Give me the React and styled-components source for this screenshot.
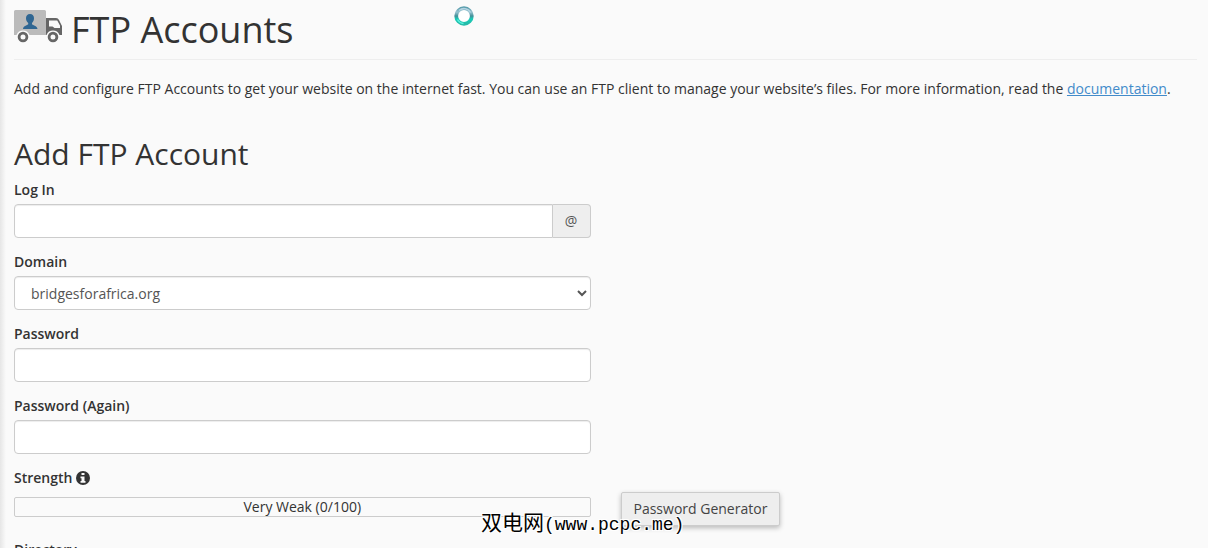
import React from 'react'
import styled, { createGlobalStyle } from 'styled-components'

const GlobalStyle = createGlobalStyle`
  * {
    box-sizing: border-box;
  }

  body {
    margin: 0;
    background: #fafafa;
    color: #333;
    font-family: 'Open Sans', 'Noto Sans', sans-serif;
    font-size: 14px;
    line-height: 20px;
  }
`

const Page = styled.main`
  position: relative;
  height: 100vh;
  overflow: hidden;
  padding: 0 11px 0 14px;
  background: linear-gradient(to right, #e6e6e6, #fafafa 6px);
`

const PageHeader = styled.header`
  display: flex;
  align-items: flex-start;
  gap: 9px;
  height: 60px;
  padding-top: 10px;
  border-bottom: 1px solid #eee;
`

const PageTitle = styled.h1`
  margin: 0;
  font-size: 36px;
  font-weight: 400;
  line-height: 40px;
`

const Description = styled.p`
  margin: 19px 0 0;
`

const Link = styled.a`
  color: #428bca;
  text-decoration: underline;
`

const SectionTitle = styled.h2`
  margin: 38px 0 10px;
  font-size: 30px;
  font-weight: 400;
  line-height: 33px;
`

const Row = styled.div`
  display: grid;
  grid-template-columns: 1fr 1fr;
  column-gap: 30px;
  align-items: start;
`

const FormGroup = styled.div`
  margin-bottom: 14px;
`

const Label = styled.label`
  display: flex;
  align-items: center;
  gap: 4px;
  margin-bottom: 4px;
  font-weight: 600;
`

const InputGroup = styled.div`
  display: flex;
`

const Input = styled.input`
  display: block;
  flex: 1;
  width: 100%;
  min-width: 0;
  height: 34px;
  padding: 6px 12px;
  border: 1px solid #ccc;
  border-radius: ${props => (props.$joined ? '4px 0 0 4px' : '4px')};
  background: #fff;
  box-shadow: inset 0 1px 1px rgba(0, 0, 0, 0.075);
  color: #555;
  font: inherit;
`

const Addon = styled.span`
  width: 38px;
  padding: 6px 0;
  border: 1px solid #ccc;
  border-left: 0;
  border-radius: 0 4px 4px 0;
  background: #eee;
  color: #555;
  text-align: center;
`

const Select = styled.select`
  display: block;
  width: 100%;
  height: 34px;
  padding: 6px 0 6px 12px;
  border: 1px solid #ccc;
  border-radius: 4px;
  background: #fff;
  box-shadow: inset 0 1px 1px rgba(0, 0, 0, 0.075);
  color: #555;
  font: inherit;
`

const StrengthRow = styled(Row)`
  margin-bottom: 14px;
`

const StrengthBar = styled.div`
  height: 20px;
  margin-top: 5px;
  border: 1px solid #ccc;
  border-radius: 2px;
  line-height: 18px;
  text-align: center;
`

const Button = styled.button`
  justify-self: start;
  height: 34px;
  padding: 0 12px;
  border: 1px solid #ccc;
  border-radius: 2px;
  background: #eee;
  box-shadow: 0 2px 5px rgba(0, 0, 0, 0.26);
  color: #444;
  font: inherit;
`

const Loading = styled.div`
  position: absolute;
  top: 6px;
  left: 454px;
  width: 20px;
  height: 20px;
`

const Watermark = styled.div`
  position: absolute;
  bottom: 11px;
  left: 481px;
  color: #000;
  font-family: 'Liberation Mono', 'Noto Sans CJK SC', monospace;
  font-size: 18px;
  line-height: 24px;
  text-shadow: 1px 1px 0 #fff, -1px -1px 0 #fff, 1px -1px 0 #fff,
    -1px 1px 0 #fff;
  white-space: nowrap;
  pointer-events: none;
`

const WatermarkName = styled.span`
  font-family: 'Noto Sans CJK SC', sans-serif;
  font-size: 21px;
`

function TruckIcon() {
  return (
    <svg width="48" height="33" viewBox="0 0 48 33" aria-hidden="true">
      <path
        fill="#bbb"
        d="M1.500 0h29A1.500 1.500 0 0 1 32 1.500V25H15.500a7 7 0 0 0-13 0H0V1.500A1.500 1.500 0 0 1 1.500 0z"
      />
      <path
        fill="#2f6692"
        d="M16 4c2.600 0 4 1.800 4 4.300 0 1.900-.8 3.600-2 4.700v1.200c0 .8 5.500 1.500 5.500 4.800H9c0-3.300 5.200-4 5.200-4.800V13c-1.300-1.100-2.200-2.800-2.200-4.700C12 5.800 13.400 4 16 4z"
      />
      <path
        fill="#666"
        fillRule="evenodd"
        d="M32 8h10c1.500 0 2.300.7 3 2l3 6v9h-2.500a7 7 0 0 0-13 0H32zM35 10.500v6h3.500l2 1.500H46v-2.500l-2.800-5z"
      />
      <circle cx="9" cy="27" r="3.900" fill="#fafafa" stroke="#666" strokeWidth="2.800" />
      <circle cx="39" cy="27" r="3.900" fill="#fafafa" stroke="#666" strokeWidth="2.800" />
    </svg>
  )
}

function InfoIcon() {
  return (
    <svg width="14" height="14" viewBox="0 0 14 14" aria-hidden="true">
      <circle cx="7" cy="7" r="7" fill="#333" />
      <path fill="#fafafa" d="M5.500 2h3v2h-3zM4.500 5.500h4v4.500h1v1.800h-5V10h1V7.300h-1z" />
    </svg>
  )
}

function Spinner() {
  return (
    <svg width="20" height="20" viewBox="0 0 20 20" role="img" aria-label="Loading">
      <defs>
        <linearGradient id="ring" x1="0" y1="0" x2="0" y2="1">
          <stop offset="0" stopColor="#5c9fae" />
          <stop offset="0.25" stopColor="#98c3d0" />
          <stop offset="0.5" stopColor="#438f98" />
          <stop offset="0.7" stopColor="#17cdb8" />
          <stop offset="1" stopColor="#25bba9" />
        </linearGradient>
      </defs>
      <circle cx="10" cy="10" r="7.800" fill="#fff" stroke="url(#ring)" strokeWidth="3.800" />
      <path d="M3.500 13.500a7.500 7.500 0 0 0 6 4" fill="none" stroke="#5cf0df" strokeWidth="1.500" />
      <path d="M5 4.500a7.500 7.500 0 0 1 11.500 2" fill="none" stroke="#b4d3e2" strokeWidth="1.500" />
    </svg>
  )
}

export default function App() {
  return (
    <>
      <GlobalStyle />
      <Page>
        <PageHeader>
          <TruckIcon />
          <PageTitle>FTP Accounts</PageTitle>
        </PageHeader>
        <Description>
          Add and configure FTP Accounts to get your website on the internet
          fast. You can use an FTP client to manage your website’s files. For
          more information, read the <Link href="#docs">documentation</Link>.
        </Description>

        <SectionTitle>Add FTP Account</SectionTitle>
        <form>
          <Row>
            <div>
              <FormGroup>
                <Label htmlFor="login">Log In</Label>
                <InputGroup>
                  <Input id="login" type="text" $joined />
                  <Addon>@</Addon>
                </InputGroup>
              </FormGroup>
              <FormGroup>
                <Label htmlFor="domain">Domain</Label>
                <Select id="domain">
                  <option>bridgesforafrica.org</option>
                </Select>
              </FormGroup>
              <FormGroup>
                <Label htmlFor="password">Password</Label>
                <Input id="password" type="password" />
              </FormGroup>
              <FormGroup>
                <Label htmlFor="password2">Password (Again)</Label>
                <Input id="password2" type="password" />
              </FormGroup>
            </div>
          </Row>
          <Label as="div" id="strength">
            Strength <InfoIcon />
          </Label>
          <StrengthRow>
            <StrengthBar
              role="meter"
              aria-labelledby="strength"
              aria-valuemin={0}
              aria-valuemax={100}
              aria-valuenow={0}
            >
              Very Weak (0/100)
            </StrengthBar>
            <Button type="button">Password Generator</Button>
          </StrengthRow>
          <Row>
            <FormGroup>
              <Label htmlFor="directory">Directory</Label>
              <Input id="directory" type="text" />
            </FormGroup>
          </Row>
        </form>

        <Loading>
          <Spinner />
        </Loading>
        <Watermark>
          <WatermarkName>双电网</WatermarkName>(www.pcpc.me)
        </Watermark>
      </Page>
    </>
  )
}
